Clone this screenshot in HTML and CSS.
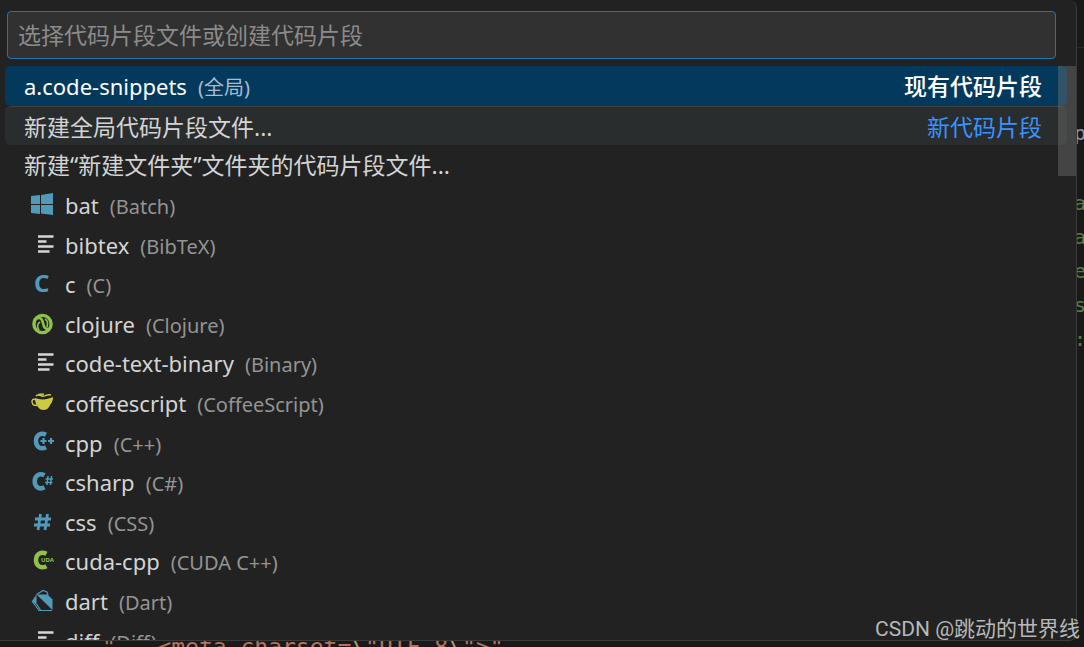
FILE: index.html
```html
<!DOCTYPE html>
<html lang="zh-CN">
<head>
  <meta charset="UTF-8" />
  <meta name="viewport" content="width=device-width, initial-scale=1.0" />
  <title>代码片段</title>
  <link rel="stylesheet" href="styles.css">
</head>
<body>
  <!-- shared icons -->
  <svg class="icon-defs" width="0" height="0" aria-hidden="true">
    <symbol id="icon-text" viewBox="0 0 24 24">
      <path d="M8 4.500h15.500M8 9.500h8.500M8 14.500h15.500M8 19.500h11.500" stroke="#d4d7d6" stroke-width="2.4" fill="none"/>
    </symbol>
  </svg>

  <div class="editor" aria-hidden="true">
    <div class="code-edge">
      <span class="code-plain">p</span>
      <span class="code-green">a</span>
      <span class="code-green">a</span>
      <span class="code-green">e</span>
      <span class="code-green">s</span>
      <span class="code-green">:</span>
    </div>
    <pre class="code-line">"   &lt;meta charset=<b>\</b>"UTF-8<b>\</b>"&gt;"</pre>
  </div>

  <div class="quick-pick">
    <div class="quick-input">
      <input type="text" id="filter" aria-label="选择代码片段文件或创建代码片段" placeholder="选择代码片段文件或创建代码片段">
    </div>

    <div class="list-wrap">
      <ul class="list" role="listbox" aria-label="代码片段">
        <li class="row selected" role="option" aria-selected="true">
          <span class="name">a.code-snippets</span>
          <span class="desc">(全局)</span>
          <span class="group">现有代码片段</span>
        </li>
        <li class="row hovered" role="option">
          <span class="name name-cjk">新建全局代码片段文件...</span>
          <span class="group">新代码片段</span>
        </li>
        <li class="row" role="option">
          <span class="name name-cjk">新建“新建文件夹”文件夹的代码片段文件...</span>
        </li>
        <li class="row" role="option">
          <svg class="icon" viewBox="0 0 24 24" fill="#519aba"><path d="M1 4l9-1v9H1zM11 2.900l12-1.900v11H11zM1 13h9v9l-9-1zM11 13h12v10l-12-1.500z"/></svg>
          <span class="name">bat</span>
          <span class="desc">(Batch)</span>
        </li>
        <li class="row" role="option">
          <svg class="icon"><use href="#icon-text"/></svg>
          <span class="name">bibtex</span>
          <span class="desc">(BibTeX)</span>
        </li>
        <li class="row" role="option">
          <svg class="icon" viewBox="0 0 24 24"><text class="icon-letter" x="4" y="21">C</text></svg>
          <span class="name">c</span>
          <span class="desc">(C)</span>
        </li>
        <li class="row" role="option">
          <svg class="icon" viewBox="0 0 24 24" fill="none" stroke="#8dc149">
            <circle cx="12.500" cy="13" r="8.600" stroke-width="3.400"/>
            <path d="M4 9c5-4 8-2 9 3s2 6 6 6" stroke-width="2.600"/>
            <path d="M10 11c-3 2-3 5-1 8M15 8c3 2 3 4 2 8" stroke-width="1.600"/>
          </svg>
          <span class="name">clojure</span>
          <span class="desc">(Clojure)</span>
        </li>
        <li class="row" role="option">
          <svg class="icon"><use href="#icon-text"/></svg>
          <span class="name">code-text-binary</span>
          <span class="desc">(Binary)</span>
        </li>
        <li class="row" role="option">
          <svg class="icon" viewBox="0 0 24 24">
            <path d="M5 8c5 2 12 2 18-1 0 5-2 6-4 10-2 4-9 4-11 0C6 14 5 13 5 8z" fill="#cbcb41"/>
            <path d="M6 6c2-2 4-1 6 0s5-2 9-1M8 4.500c3 0 4-1 6 0" stroke="#cbcb41" stroke-width="1.500" fill="none"/>
            <path d="M5 9.500c-3-1-4 2-2 5 1 1 2 1 4 1" stroke="#cbcb41" stroke-width="1.500" fill="none"/>
          </svg>
          <span class="name">coffeescript</span>
          <span class="desc">(CoffeeScript)</span>
        </li>
        <li class="row" role="option">
          <svg class="icon" viewBox="0 0 24 24" fill="none" stroke="#519aba">
            <path d="M16 4.800C10.500 2 6 5 6 11s4.500 9 10 6.200" stroke-width="4.500"/>
            <path d="M10.500 11h6M13.500 8v6M18 11h6M21 8v6" stroke-width="2.200"/>
          </svg>
          <span class="name">cpp</span>
          <span class="desc">(C++)</span>
        </li>
        <li class="row" role="option">
          <svg class="icon" viewBox="0 0 24 24" fill="none" stroke="#519aba">
            <path d="M14.500 6.300C9.500 3.500 4.700 6.500 4.700 12.300s4.800 8.700 9.800 6" stroke-width="4.500"/>
            <path d="M18 7l-1 9M21.500 7l-1 9M15.500 10h7.500M15 13.500h7.500" stroke-width="1.500"/>
          </svg>
          <span class="name">csharp</span>
          <span class="desc">(C#)</span>
        </li>
        <li class="row" role="option">
          <svg class="icon" viewBox="0 0 24 24" fill="none" stroke="#519aba">
            <path d="M10.500 5L8 21M17.500 5L15 21M5 10h16M4 16h16" stroke-width="2.800"/>
          </svg>
          <span class="name">css</span>
          <span class="desc">(CSS)</span>
        </li>
        <li class="row" role="option">
          <svg class="icon" viewBox="0 0 24 24">
            <path d="M16.500 5.800C11 3 6 6 6 12s5 9 10.500 6.200" stroke="#8dc149" stroke-width="4.500" fill="none"/>
            <rect x="10.500" y="8.500" width="13.500" height="7" fill="#222222"/>
            <text class="icon-tiny" x="11" y="14">UDA</text>
          </svg>
          <span class="name">cuda-cpp</span>
          <span class="desc">(CUDA C++)</span>
        </li>
        <li class="row" role="option">
          <svg class="icon" viewBox="0 0 24 24">
            <path d="M6.500 6.500h11l5 5V22z" fill="#519aba"/>
            <path d="M2 13l4.500-6.500V17z" fill="#519aba"/>
            <path d="M6.500 6.500L13 2.500l4 1.500 1 3M2 13l7 9.500h13M6.500 16l4 6" fill="none" stroke="#519aba" stroke-width="1.200"/>
          </svg>
          <span class="name">dart</span>
          <span class="desc">(Dart)</span>
        </li>
        <li class="row" role="option">
          <svg class="icon"><use href="#icon-text"/></svg>
          <span class="name">diff</span>
          <span class="desc">(Diff)</span>
        </li>
      </ul>
      <div class="scrollbar"></div>
    </div>
  </div>

  <div class="watermark">CSDN @跳动的世界线</div>
</body>
</html>
```

FILE: styles.css
```css
* {
  box-sizing: border-box;
}
body {
  margin: 0;
  height: 100vh;
  overflow: hidden;
  position: relative;
  padding: 0 7px 6px 0;
  background-color: #191919;
  color: #d4d4d4;
  font-family: "Noto Sans", "Noto Sans CJK SC", sans-serif;
}
.icon-defs {
  position: absolute;
}

/* editor behind the picker */
.editor {
  position: absolute;
  inset: 0;
  font-family: "DejaVu Sans Mono", monospace;
  font-size: 20px;
  line-height: 34px;
}
.code-edge {
  position: absolute;
  top: 47px;
  right: 0;
  width: 10px;
  height: 310px;
  border-top: 1px solid #2b2b2b;
  padding-top: 68px;
  display: flex;
  flex-direction: column;
  overflow: hidden;
}
.code-plain {
  color: #9a9a9a;
  margin-bottom: 36px;
}
.code-green {
  color: #56803f;
}
.code-line {
  position: absolute;
  left: 102px;
  bottom: -17px;
  margin: 0;
  font-family: inherit;
  font-size: 23px;
  color: #b5745a;
}
.code-line b {
  font-weight: normal;
  color: #b39b62;
}

.quick-pick {
  position: relative;
  display: flex;
  flex-direction: column;
  height: 100%;
  background-color: #222222;
  border: 1px solid #3a3a3a;
  border-top: none;
  border-left: none;
  border-radius: 0 8px 8px 0;
  overflow: hidden;
}
.quick-input {
  padding: 11px 20px 7px 7px;
}
.quick-input input {
  display: block;
  width: 100%;
  height: 48px;
  padding: 0 10px;
  background-color: #313131;
  border: 1px solid #1f74b5;
  border-radius: 4px;
  outline: none;
  color: #cccccc;
  font-family: inherit;
  font-size: 23px;
}
.quick-input input::placeholder {
  color: #8b8b8b;
  opacity: 1;
}

.list-wrap {
  position: relative;
  flex: 1;
  min-height: 0;
  overflow: hidden;
}
.list {
  list-style: none;
  margin: 0;
  padding: 0 9px 0 5px;
}
.row {
  display: flex;
  align-items: baseline;
  height: 40px;
  padding: 0 25px 0 19px;
  border-radius: 6px;
  font-size: 22px;
  line-height: 40px;
  white-space: nowrap;
  cursor: pointer;
}
.row:nth-child(5n+2),
.row:nth-child(5n) {
  height: 39px;
}
.row.selected {
  background-color: #04395e;
  color: #ffffff;
}
.row.hovered {
  background-color: #2a2d2e;
  border-top: 1px solid #3f3f3f;
}
.icon {
  flex: none;
  align-self: flex-start;
  width: 24px;
  height: 24px;
  margin: 7px 11px 0 6px;
}
.icon-letter {
  font-size: 24px;
  font-weight: bold;
  fill: #519aba;
}
.icon-tiny {
  font-size: 6px;
  font-weight: bold;
  fill: #8dc149;
}
.name-cjk {
  font-size: 23px;
}
.desc {
  margin-left: 11px;
  font-size: 20px;
  color: #949494;
}
.selected .desc {
  color: #a9bccb;
}
.group {
  margin-left: auto;
  font-size: 23px;
  color: #3794ff;
}
.selected .group {
  font-weight: 500;
  color: #ffffff;
}
.scrollbar {
  position: absolute;
  top: 0;
  right: 0;
  width: 18px;
  height: 110px;
  background-color: rgba(121, 121, 121, 0.4);
}

.watermark {
  position: absolute;
  right: 4px;
  bottom: 2px;
  font-family: Roboto, "Noto Sans CJK SC", sans-serif;
  font-size: 21px;
  line-height: 32px;
  color: #b8b8b8;
}
```
